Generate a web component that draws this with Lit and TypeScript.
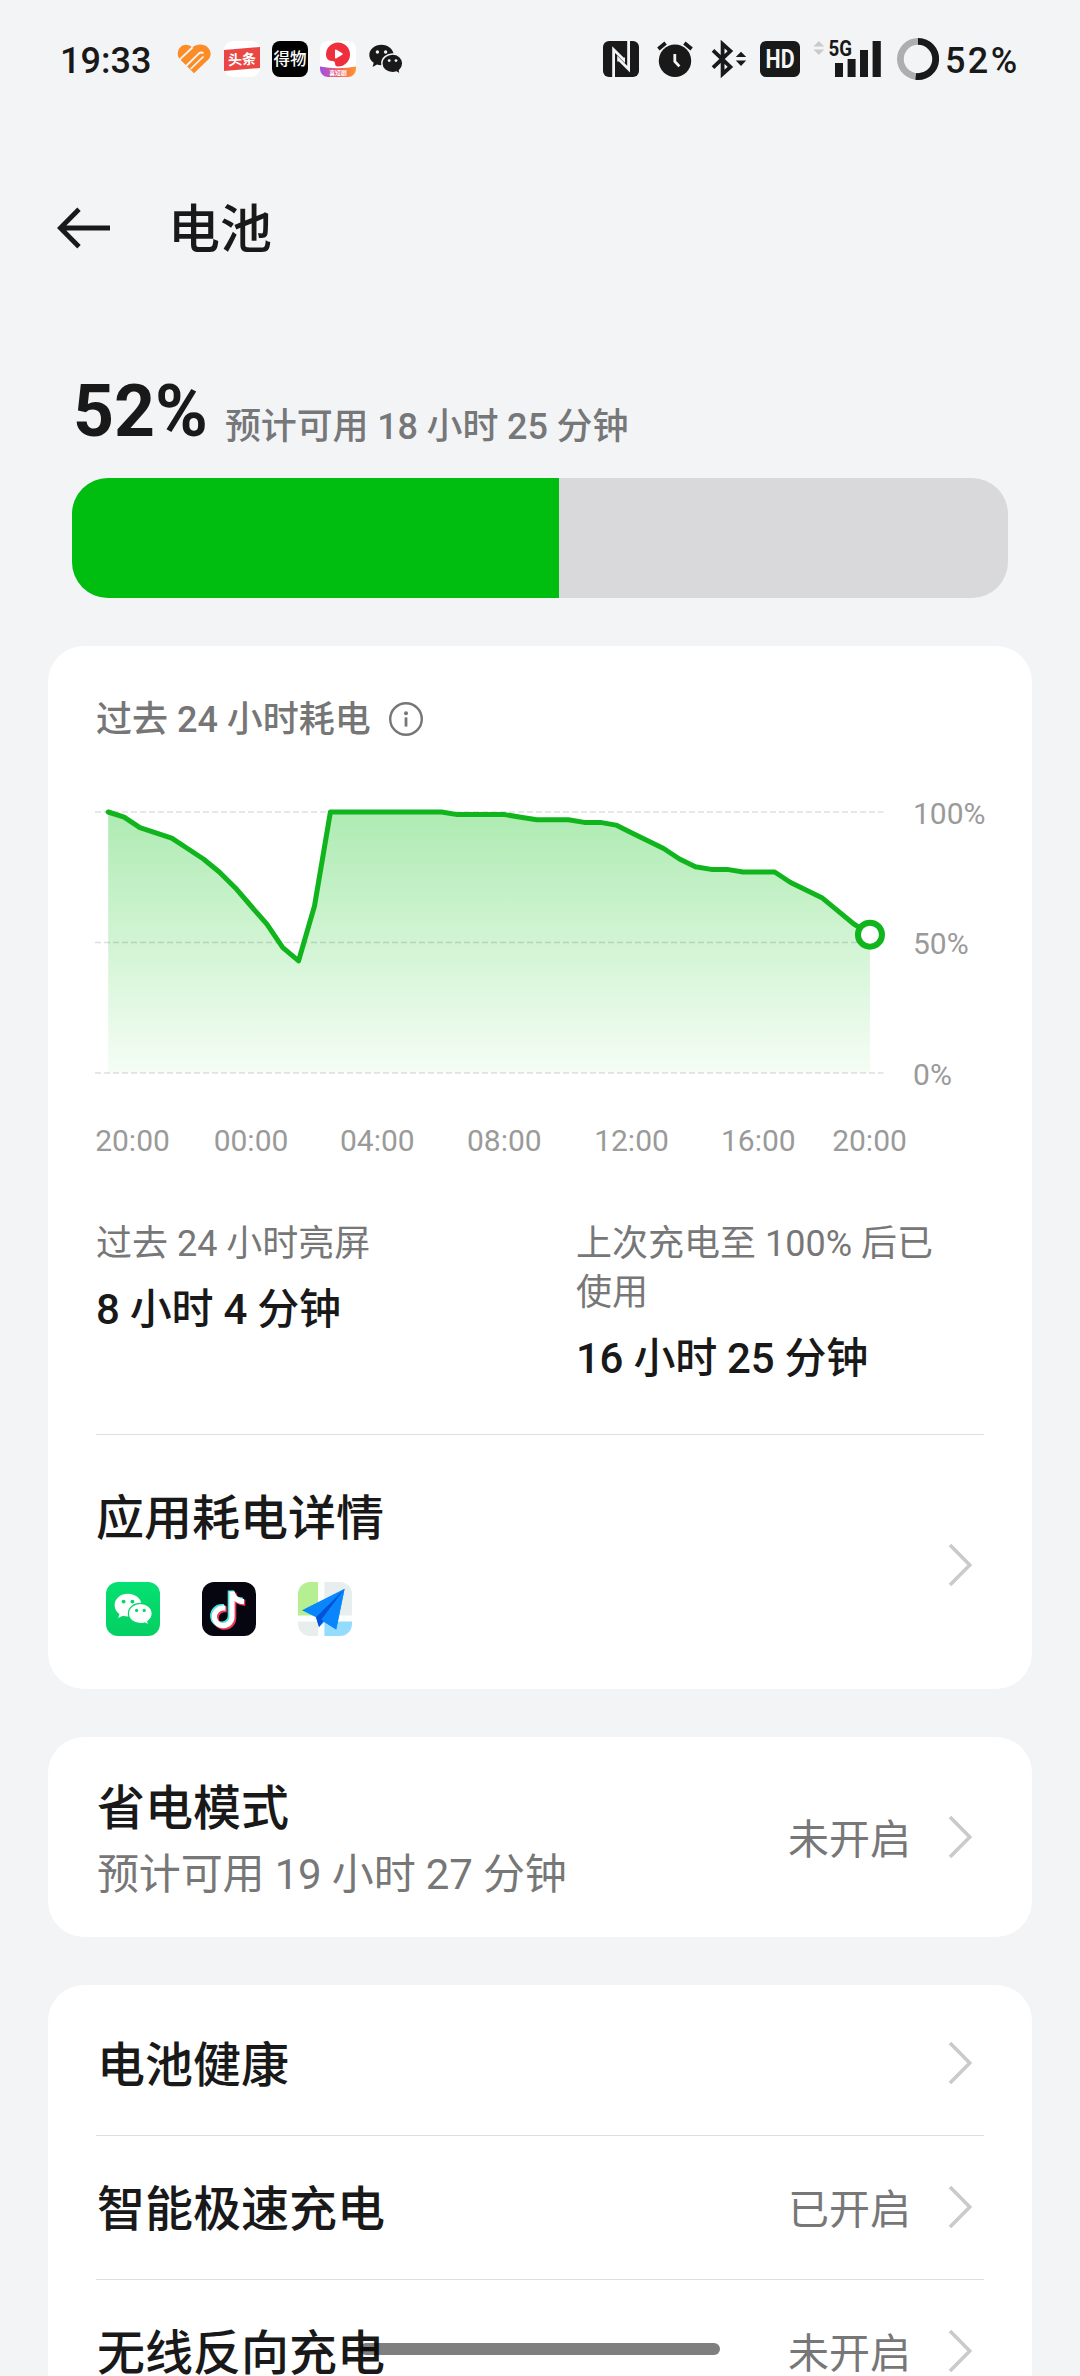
import { LitElement, html, svg, css } from "lit";
import { customElement, property } from "lit/decorators.js";

const LEVELS = [
  100, 98, 94, 92, 90, 86, 82, 77, 71, 64, 57, 48, 43, 64, 100, 100, 100, 100,
  100, 100, 100, 100, 99, 99, 99, 99, 98, 97, 97, 97, 96, 96, 95, 92, 89, 86,
  82, 79, 78, 78, 77, 77, 77, 73, 70, 67, 62, 57, 53,
];

@customElement("status-bar")
class StatusBar extends LitElement {
  static styles = css`
    :host { display: flex; justify-content: space-between; height: 118px; padding: 0 56px 0 60px; align-items: center; box-sizing: border-box; }
    .left, .right { display: flex; align-items: center; }
    .icons { display: flex; gap: 12px; margin-left: 25px; }
    .text { font-size: 36px; line-height: 44px; font-weight: 500; padding-top: 3px; }
    .time { width: 91px; }
    .percent { width: 79px; margin-left: 6px; letter-spacing: 2.4px; }
    svg { display: block; flex: none; overflow: visible; }
    .alarm, .bt { margin-left: 18px; }
    .hd, .signal { margin-left: 13px; }
    .ring { margin-left: 16px; }
    .cjk { font-family: "Noto Sans CJK SC", sans-serif; }
    .latin { font-family: Roboto, sans-serif; font-weight: 700; }
  `;
  render() {
    return html`
      <div class="left">
        <div class="text time">19:33</div>
        <div class="icons">
          <svg width="36" height="36" viewBox="0 0 36 36" fill="none">
            <path d="M18 32.2 4.2 18.6C.8 15 1 9.4 4.4 6.2C7.8 3 12.6 3 16.4 6.4C21 2.6 28 2.6 31.8 6.4C35.6 10.2 35.6 15.4 31.8 19Z" fill="#fb8c26"/>
            <path d="M3.6 18.6 16.6 6.2M9.8 25.2 22.8 12.6Q25.4 10.4 27.4 12.4M14.6 27.8 27.4 15.4" stroke="#f3f4f6" stroke-width="1.9"/>
            <path d="M13.6 26.8 26.2 14.6" stroke="#fb8c26" stroke-width="1.4"/>
          </svg>
          <svg width="36" height="36" viewBox="0 0 36 36">
            <rect width="36" height="36" rx="9" fill="#fff"/>
            <path d="M0 9 36 6V27L0 30Z" fill="#ea4643"/>
            <text class="cjk" x="18" y="23.5" text-anchor="middle" font-size="14" font-weight="700" fill="#fff" transform="rotate(-3 18 18)">头条</text>
          </svg>
          <svg width="36" height="36" viewBox="0 0 36 36">
            <rect width="36" height="36" rx="8" fill="#000"/>
            <text class="cjk" x="18" y="24.2" text-anchor="middle" font-size="16.5" font-weight="500" fill="#fff">得物</text>
          </svg>
          <svg width="36" height="36" viewBox="0 0 36 36">
            <defs>
              <linearGradient id="band"><stop offset="0" stop-color="#9a52ee"/><stop offset=".5" stop-color="#ee5a68"/><stop offset="1" stop-color="#ff9a2c"/></linearGradient>
              <clipPath id="tile"><rect width="36" height="36" rx="8"/></clipPath>
            </defs>
            <g clip-path="url(#tile)">
              <rect width="36" height="36" fill="#fff"/>
              <path d="M6 13.5A12 12 0 1 1 18 25.5Q15 25.5 15 22Q15 19.8 12 20Q6 20 6 13.5Z" fill="#ee2f3c"/>
              <path d="M15 9.5Q15 8 16.5 8.8L22.3 12.3Q23.3 13 22.3 13.8L16.5 17.2Q15 18 15 16.5Z" fill="#fff"/>
              <path d="M0 25.5Q18 29 36 25.5V36H0Z" fill="url(#band)"/>
            </g>
            <text class="cjk" x="18" y="34" text-anchor="middle" font-size="5.8" font-weight="700" fill="#fff">喜短剧</text>
          </svg>
          <svg width="36" height="36" viewBox="0 0 36 36" fill="#191919">
            <path d="M13.4 3.8C6.8 3.8 1.3 8.2 1.3 14C1.3 17.2 3 20 5.7 21.8L4.6 26L9 23.6Q11 24.3 13.4 24.3C20 24.3 25.6 19.8 25.6 14S20 3.8 13.4 3.8Z"/>
            <path d="M24.6 13C19 13 13.8 17 13.8 22.3S18.6 31.6 24.6 31.6Q26.7 31.6 28.4 31L32.4 33.4L31.4 29.4C33.4 27.6 34.8 25.2 34.8 22.3C34.8 17 30 13 24.6 13Z" stroke="#f3f4f6" stroke-width="1.4"/>
            <g fill="#f3f4f6"><circle cx="9.4" cy="11" r="1.7"/><circle cx="17.6" cy="11" r="1.7"/><circle cx="21.2" cy="19.6" r="1.4"/><circle cx="28" cy="19.6" r="1.4"/></g>
          </svg>
        </div>
      </div>
      <div class="right">
        <svg width="36" height="36" viewBox="0 0 36 36">
          <rect width="36" height="36" rx="6" fill="#191919"/>
          <path d="M10.6 36V8.6L20.6 18.6V16.5M25.6 0V28.2L15.6 18.2V20.5" fill="none" stroke="#f3f4f6" stroke-width="2.8"/>
        </svg>
        <svg class="alarm" width="36" height="36" viewBox="0 0 36 36">
          <circle cx="18" cy="19.8" r="16.2" fill="#191919"/>
          <path d="M1.4 8 8.6 2M34.6 8 27.4 2" stroke="#191919" stroke-width="3.8"/>
          <path d="M17.8 13V20.4L22.4 25.4" fill="none" stroke="#f3f4f6" stroke-width="2.8"/>
        </svg>
        <svg class="bt" width="36" height="36" viewBox="0 0 36 36">
          <path d="M2 9.4 19.4 26 11.6 33V3L19.4 10 2 26.6" fill="none" stroke="#191919" stroke-width="3.8"/>
          <path d="M30 10.8 35.2 16H24.8ZM30 25 35.2 19.6H24.8Z" fill="#191919"/>
        </svg>
        <svg class="hd" width="40" height="36" viewBox="0 0 40 36">
          <rect width="40" height="36" rx="6" fill="#191919"/>
          <text class="latin" x="5.6" y="27.4" font-size="25.5" textLength="29" lengthAdjust="spacingAndGlyphs" fill="#f3f4f6">HD</text>
        </svg>
        <svg class="signal" width="68" height="36" viewBox="0 0 68 36">
          <path d="M5.8 0 11.2 5.6H.4ZM5.8 14 11.2 8.4H.4Z" fill="#c9cacc"/>
          <text class="latin" x="15.6" y="15" font-size="21.5" textLength="23.5" lengthAdjust="spacingAndGlyphs" fill="#191919">5G</text>
          <path d="M22 22h8v14h-8ZM34.6 18h8v18h-8ZM47 9h8v27h-8ZM59.6 0h8.2v36h-8.2Z" fill="#191919"/>
        </svg>
        <svg class="ring" width="42" height="42" viewBox="0 0 42 42" fill="none" stroke-width="6.8">
          <circle cx="21" cy="21" r="17.6" stroke="#adaeb0"/>
          <path d="M21 3.4A17.6 17.6 0 1 1 18.8 38.45" stroke="#191919"/>
        </svg>
        <div class="text percent">52%</div>
      </div>
    `;
  }
}

@customElement("battery-chart")
class BatteryChart extends LitElement {
  static styles = css`
    :host { display: block; height: 386px; }
    svg { display: block; overflow: visible; }
    .label { font: 400 30px Roboto, sans-serif; fill: #9a9a9a; }
    .middle { text-anchor: middle; }
    .grid { stroke: #000; stroke-opacity: 0.13; stroke-width: 1.6; stroke-dasharray: 6 3; }
    .line { fill: none; stroke: #10b51d; stroke-width: 5; stroke-linejoin: round; stroke-linecap: round; }
    .marker { fill: #fff; stroke: #10b51d; stroke-width: 6; }
  `;
  render() {
    const x = (i: number) => 12.2 + i * 15.87;
    const y = (v: number) => 279 - v * 2.61;
    const pts = LEVELS.map((v, i) => `${x(i).toFixed(1)},${y(v).toFixed(1)}`).join(" ");
    const last = LEVELS.length - 1;
    const times: [string, number][] = [
      ["20:00", 36.5], ["00:00", 155], ["04:00", 281.3], ["08:00", 408.3],
      ["12:00", 535.5], ["16:00", 662.3], ["20:00", 773.5],
    ];
    return html`
      <svg width="888" height="386" viewBox="0 0 888 386">
        <defs>
          <linearGradient id="fade" gradientUnits="userSpaceOnUse" x1="0" y1="18" x2="0" y2="279">
            <stop offset="0" stop-color="#aeebb2"/>
            <stop offset="1" stop-color="#f5fdf5"/>
          </linearGradient>
        </defs>
        <polygon points="${x(0)},279 ${pts} ${x(last)},279" fill="url(#fade)"/>
        ${[100, 50, 0].map((v) => svg`
          <line class="grid" x1="-1" x2="787.5" y1=${y(v)} y2=${y(v)}></line>
          <text class="label" x="817" y=${y(v) + 11.7}>${v}%</text>`)}
        <polyline class="line" points=${pts}></polyline>
        <circle class="marker" cx=${x(last)} cy=${y(LEVELS[last])} r="12"></circle>
        ${times.map(([t, cx]) => svg`<text class="label middle" x=${cx} y="356.7">${t}</text>`)}
      </svg>
    `;
  }
}

@customElement("chevron-icon")
class ChevronIcon extends LitElement {
  static styles = css`
    :host { display: block; flex: none; width: 24px; margin-right: 12px; }
    svg { display: block; }
  `;
  render() {
    return html`<svg width="24" height="44" viewBox="0 0 24 44"><path d="M2 2 21.8 22 2 42" fill="none" stroke="#cacaca" stroke-width="3.6"/></svg>`;
  }
}

@customElement("setting-row")
class SettingRow extends LitElement {
  @property() label = "";
  @property() sub = "";
  @property() value = "";
  static styles = css`
    :host { display: flex; align-items: center; height: 144px; box-sizing: border-box; }
    .main { flex: 1; padding-left: 1px; }
    .label { font-size: 48px; line-height: 60px; font-weight: 500; color: #191919; padding-top: 5px; }
    .main.two .label { padding-top: 8px; }
    .sub { font-size: 42px; line-height: 56px; margin-top: 8px; color: #777; letter-spacing: -0.15px; }
    .value { font-size: 41px; line-height: 56px; margin-right: 37px; color: #777; padding-top: 5px; }
  `;
  render() {
    return html`
      <div class="main ${this.sub ? "two" : ""}">
        <div class="label">${this.label}</div>
        ${this.sub ? html`<div class="sub">${this.sub}</div>` : ""}
      </div>
      <div class="value">${this.value}</div>
      <chevron-icon></chevron-icon>
    `;
  }
}

@customElement("app-root")
class AppRoot extends LitElement {
  static styles = css`
    :host {
      display: block; position: relative; width: 1080px; height: 2376px; overflow: hidden;
      background: #f3f4f6; color: #191919; font-family: Roboto, "Noto Sans CJK SC", sans-serif;
    }
    svg { display: block; flex: none; }
    .header { display: flex; align-items: center; height: 220px; padding-left: 57px; }
    .title { font-size: 52px; line-height: 64px; font-weight: 500; margin-left: 57px; padding-top: 6px; }
    .level { display: flex; align-items: baseline; padding: 38px 72px 30px 73px; height: 72px; }
    .level .big { font-size: 71.5px; line-height: 72px; font-weight: 700; width: 152px; }
    .level .note { font-size: 36px; line-height: 44px; font-weight: 500; color: #767779; letter-spacing: -0.15px; position: relative; top: 3px; }
    .bar { height: 120px; margin: 0 72px 48px; border-radius: 36px; background: #d9d9db; overflow: hidden; }
    .fill { height: 100%; background: #00be10; }
    .card { margin: 0 48px 48px; padding: 0 48px; border-radius: 36px; background: #fff; }
    .heading { display: flex; align-items: center; height: 148px; font-size: 36px; line-height: 44px; font-weight: 500; color: #767676; gap: 17px; }
    .stats { display: flex; justify-content: space-between; margin-top: 40px; }
    .stat { width: 372px; }
    .stat.last { margin-right: 36px; }
    .stat .name { font-size: 36px; line-height: 49px; color: #777; }
    .stat .num { font-size: 42px; line-height: 56px; font-weight: 500; margin-top: 13px; letter-spacing: -0.25px; }
    .divider { height: 1px; background: #dedede; }
    .stats + .divider { margin-top: 47px; }
    .usage { display: flex; align-items: center; height: 254px; box-sizing: border-box; }
    .usage .main { flex: 1; padding-top: 3px; }
    .usage .name { font-size: 48px; line-height: 56px; font-weight: 500; }
    .usage chevron-icon { margin-top: 6px; }
    .apps { display: flex; gap: 42px; margin: 35px 0 0 10px; }
    .saver { height: 200px; }
    .list { padding-top: 6px; height: 432px; margin-bottom: 0; }
    .list setting-row + .divider { margin-bottom: -1px; }
    .home { position: absolute; left: 360px; top: 2343px; width: 360px; height: 12px; border-radius: 6px; background: rgba(0, 0, 0, 0.5); }
  `;
  render() {
    return html`
      <status-bar></status-bar>
      <div class="header">
        <svg width="54" height="42" viewBox="0 0 54 42"><path d="M53 21H4M22 2.2 3.4 21 22 39.8" fill="none" stroke="#191919" stroke-width="4.8"/></svg>
        <div class="title">电池</div>
      </div>
      <div class="level">
        <div class="big">52%</div>
        <div class="note">预计可用 18 小时 25 分钟</div>
      </div>
      <div class="bar"><div class="fill" style="width:52%"></div></div>

      <div class="card">
        <div class="heading">
          <span>过去 24 小时耗电</span>
          <svg width="36" height="36" viewBox="0 0 36 36">
            <circle cx="18" cy="17" r="15.8" fill="none" stroke="#767676" stroke-width="2.4"/>
            <circle cx="18" cy="11.2" r="2" fill="#767676"/>
            <path d="M18 15.4V24.6" stroke="#767676" stroke-width="2.8"/>
          </svg>
        </div>
        <battery-chart></battery-chart>
        <div class="stats">
          <div class="stat">
            <div class="name">过去 24 小时亮屏</div>
            <div class="num">8 小时 4 分钟</div>
          </div>
          <div class="stat last">
            <div class="name">上次充电至 100% 后已使用</div>
            <div class="num">16 小时 25 分钟</div>
          </div>
        </div>
        <div class="divider"></div>
        <div class="usage">
          <div class="main">
            <div class="name">应用耗电详情</div>
            <div class="apps">
              <svg width="54" height="54" viewBox="0 0 54 54">
                <defs><linearGradient id="wx" x2="0" y2="1"><stop offset="0" stop-color="#06e072"/><stop offset="1" stop-color="#04cf62"/></linearGradient></defs>
                <rect width="54" height="54" rx="12" fill="url(#wx)"/>
                <path d="M22 11.8C14.8 11.8 8.6 16.6 8.6 23.2C8.6 26.8 10.4 29.8 13.4 32L12.2 36L17 33.8Q19.4 34.6 22 34.6C29.6 34.6 35.6 29.6 35.6 23.2S29.4 11.8 22 11.8Z" fill="#fff"/>
                <path d="M34.4 21.4C27.8 21.4 22.4 25.8 22.4 31.6S27.8 41.6 34.4 41.6Q36.6 41.6 38.6 41L42.8 43L41.8 39.4C44.4 37.6 46.2 34.8 46.2 31.6C46.2 25.8 41 21.4 34.4 21.4Z" fill="#fff" stroke="#05d468" stroke-width="1.2"/>
                <g fill="#05d468"><circle cx="17.6" cy="19.6" r="1.9"/><circle cx="26.4" cy="19.6" r="1.9"/><circle cx="30.6" cy="28.4" r="1.6"/><circle cx="38.2" cy="28.4" r="1.6"/></g>
              </svg>
              <svg width="54" height="54" viewBox="0 0 54 54">
                <rect width="54" height="54" rx="12" fill="#05060f"/>
                <g fill="none" stroke-width="6">
                  <path transform="translate(-1.3 -1)" stroke="#4fe3e0" d="M30 9.6V34.6A8.8 8.8 0 1 1 21.2 26H23.4M30 9.6C30.6 15 35 19.4 42 19.6"/>
                  <path transform="translate(1.3 1.2)" stroke="#f2365c" d="M30 9.6V34.6A8.8 8.8 0 1 1 21.2 26H23.4M30 9.6C30.6 15 35 19.4 42 19.6"/>
                  <path stroke="#fff" stroke-width="5.2" d="M30 9.6V34.6A8.8 8.8 0 1 1 21.2 26H23.4M30 9.6C30.6 15 35 19.4 42 19.6"/>
                </g>
              </svg>
              <svg width="54" height="54" viewBox="0 0 54 54">
                <defs><clipPath id="map"><rect width="54" height="54" rx="12"/></clipPath></defs>
                <g clip-path="url(#map)">
                  <rect width="54" height="54" fill="#fdfefe"/>
                  <path d="M0 0H20V33.6H0Z" fill="#b6ef92"/>
                  <path d="M26.4 0H54V33.6H26.4ZM0 39.4H20V54H0Z" fill="#e8eeee"/>
                  <path d="M26.4 39.4H54V54H26.4Z" fill="#93dcfd"/>
                </g>
                <path d="M46.6 6.8 4 28.2 18 35.2 21 45 26 40 38.2 47.6Z" fill="#0a86fc"/>
                <path d="M46.6 6.8 18 35.2 21 45 25.4 38.6Z" fill="#0453d6"/>
                <path d="M46.6 6.8 23.4 37.6 38.2 47.6Z" fill="#0a86fc"/>
              </svg>
            </div>
          </div>
          <chevron-icon></chevron-icon>
        </div>
      </div>

      <div class="card">
        <setting-row class="saver" label="省电模式" sub="预计可用 19 小时 27 分钟" value="未开启"></setting-row>
      </div>

      <div class="card list">
        <setting-row label="电池健康"></setting-row>
        <div class="divider"></div>
        <setting-row label="智能极速充电" value="已开启"></setting-row>
        <div class="divider"></div>
        <setting-row label="无线反向充电" value="未开启"></setting-row>
      </div>
      <div class="home"></div>
    `;
  }
}
